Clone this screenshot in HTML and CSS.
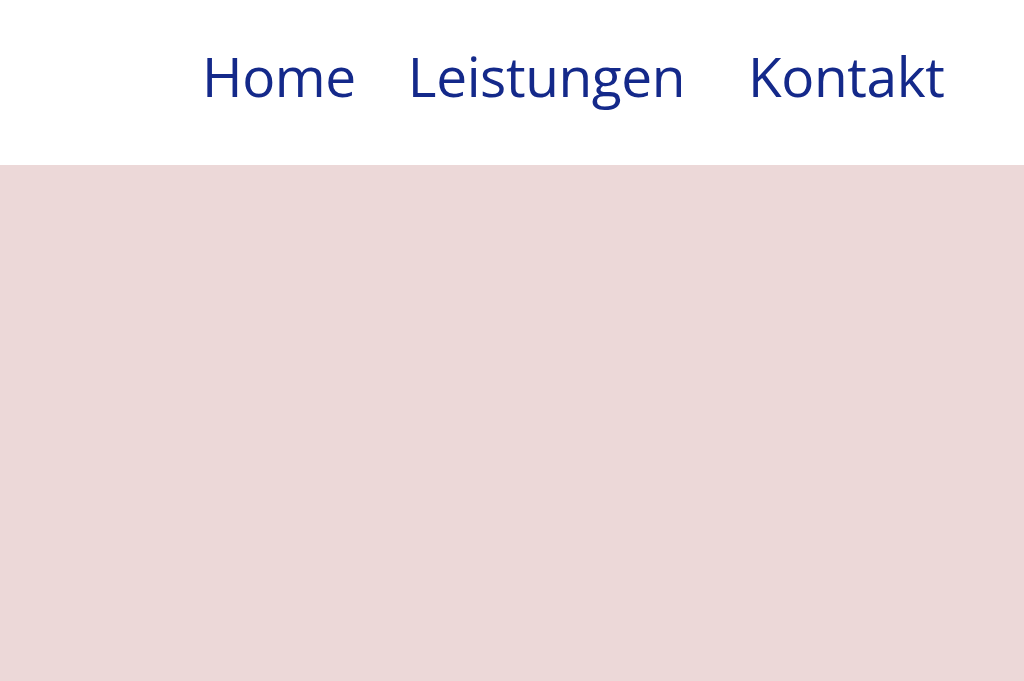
FILE: index.html
```html
<!DOCTYPE html>
<html lang="de">
<head>
<meta charset="utf-8">
<title>Nav</title>
<link rel="stylesheet" href="styles.css">
</head>
<body>
<header class="header">
  <nav class="nav">
    <a class="nav-link home" href="#">Home</a>
    <a class="nav-link leist" href="#">Leistungen</a>
    <a class="nav-link kontakt" href="#">Kontakt</a>
  </nav>
</header>
<main class="hero"></main>
</body>
</html>
```
FILE: styles.css
```css
html, body {
  margin: 0;
  padding: 0;
  height: 100%;
}
body {
  font-family: "Open Sans", sans-serif;
  background: #ecd8d8;
  display: flex;
  flex-direction: column;
}
.header {
  background: #ffffff;
  height: 165px;
  flex: none;
}
.nav {
  display: flex;
  padding-left: 202px;
  padding-top: 36px;
}
.nav-link {
  color: #14298a;
  text-decoration: none;
  font-size: 55px;
  line-height: 80px;
  letter-spacing: -0.4px;
}
.leist {
  margin-left: 52px;
}
.kontakt {
  margin-left: 63px;
}
.hero {
  flex: 1;
  background: #ecd8d8;
}
```
